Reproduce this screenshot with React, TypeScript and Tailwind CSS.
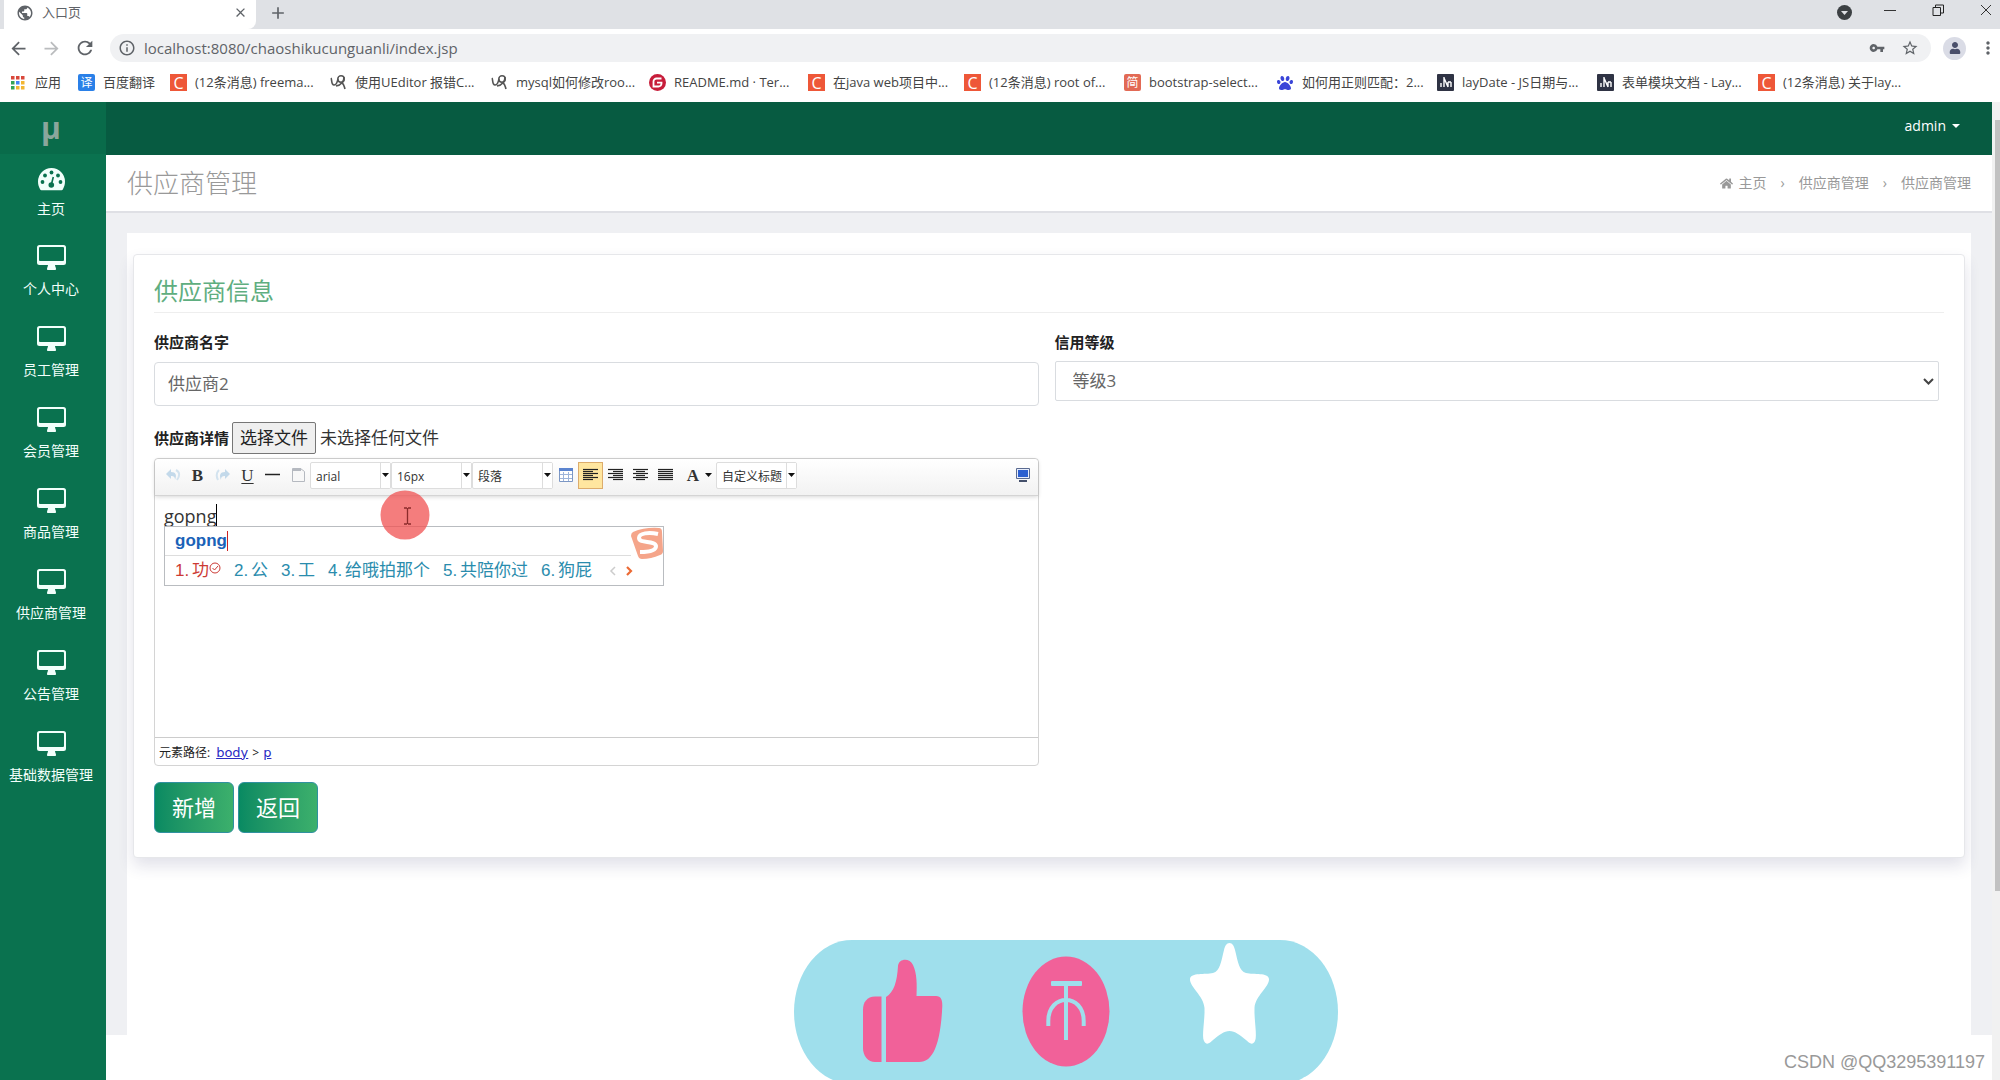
import { useRef } from "react";
import type { ReactNode } from "react";
import { FaPaw, FaHome, FaUser } from "react-icons/fa";
import {
  MdArrowBack,
  MdArrowForward,
  MdRefresh,
  MdStarBorder,
  MdVpnKey,
  MdMoreVert,
  MdPublic,
  MdInfoOutline,
  MdAdd,
  MdClose,
} from "react-icons/md";

const menuItems = [
  "个人中心",
  "员工管理",
  "会员管理",
  "商品管理",
  "供应商管理",
  "公告管理",
  "基础数据管理",
];

type IconKind = "fanyi" | "c" | "q" | "gitee" | "jian" | "baidu" | "layui";

const bookmarks: { icon: IconKind; text: string; width: string }[] = [
  { icon: "fanyi", text: "百度翻译", width: "w-[92px]" },
  { icon: "c", text: "(12条消息) freema...", width: "w-[160px]" },
  { icon: "q", text: "使用UEditor 报错C...", width: "w-[161px]" },
  { icon: "q", text: "mysql如何修改roo...", width: "w-[158px]" },
  { icon: "gitee", text: "README.md · Ter...", width: "w-[159px]" },
  { icon: "c", text: "在java web项目中...", width: "w-[156px]" },
  { icon: "c", text: "(12条消息) root of...", width: "w-[160px]" },
  { icon: "jian", text: "bootstrap-select...", width: "w-[153px]" },
  { icon: "baidu", text: "如何用正则匹配：2...", width: "w-[160px]" },
  { icon: "layui", text: "layDate - JS日期与...", width: "w-[160px]" },
  { icon: "layui", text: "表单模块文档 - Lay...", width: "w-[161px]" },
  { icon: "c", text: "(12条消息) 关于lay...", width: "w-[160px]" },
];

function BookmarkIcon({ kind }: { kind: IconKind }) {
  const box = "flex h-[17px] w-[17px] shrink-0 items-center justify-center text-white leading-none";
  switch (kind) {
    case "fanyi":
      return <span className={`${box} rounded-xs bg-[#2a80e8] text-xs`}>译</span>;
    case "c":
      return <span className={`${box} bg-[#ee5738] text-base`}>C</span>;
    case "jian":
      return <span className={`${box} rounded-xs bg-[#e26a55] text-xs`}>简</span>;
    case "gitee":
      return (
        <svg className="h-[17px] w-[17px] shrink-0" viewBox="0 0 17 17">
          <circle cx="8.5" cy="8.5" r="8.5" fill="#c71d3a" />
          <path d="M12.5 4.500H7.500a3 3 0 0 0-3 3v5h5a3 3 0 0 0 3-3V8.700H8" fill="none" stroke="#fff" strokeWidth="1.8" />
        </svg>
      );
    case "baidu":
      return <FaPaw className="mr-px h-4 w-4 shrink-0 text-[#3a45d8]" />;
    case "layui":
      return (
        <svg className="h-[17px] w-[17px] shrink-0" viewBox="0 0 17 17">
          <rect width="17" height="17" rx="1" fill="#2f3344" />
          <path d="M4 13V9M7 3v10M7 4l4 9M11 8v5M14 8v5M11 8h3" fill="none" stroke="#fff" strokeWidth="1.4" />
        </svg>
      );
    default:
      return (
        <svg className="h-[17px] w-[17px] shrink-0" viewBox="0 0 17 17" fill="none" stroke="#555" strokeWidth="1.6">
          <path d="M1 4c1 1 0 7 3 7s3-3 4-6" />
          <circle cx="11" cy="5" r="3.2" />
          <path d="M14 3c0 5-3 8-8 9M12 9c2 1 2 3 3 6" />
        </svg>
      );
  }
}

function BrowserChrome() {
  const dots = ["#d9483b", "#d9483b", "#d9483b", "#35a355", "#4285f4", "#f2b632", "#35a355", "#f2b632", "#f2b632"];
  return (
    <div className="text-[#5f6368]">
      {/* Tab strip */}
      <div className="flex h-[29px] justify-between bg-[#dfe1e5] pl-1">
        <div className="flex h-full items-center">
          <div className="flex h-full w-[252px] items-center rounded-br-lg bg-white pr-2 pb-1 pl-3">
            <MdPublic className="h-[18px] w-[18px]" />
            <span className="ml-2 text-[13px]">入口页</span>
            <button aria-label="关闭标签页" className="ml-auto">
              <MdClose className="h-[15px] w-[15px]" />
            </button>
          </div>
          <button aria-label="新标签页" className="ml-3 pb-1">
            <MdAdd className="h-5 w-5" />
          </button>
        </div>
        <div className="flex h-5 items-center text-[#333]">
          <button aria-label="搜索标签页" className="mt-1 mr-8">
            <svg width="15" height="15" viewBox="0 0 15 15">
              <circle cx="7.5" cy="7.5" r="7.5" fill="#3c4043" />
              <path d="M4 6h7l-3.500 4z" fill="#dfe1e5" />
            </svg>
          </button>
          <button aria-label="最小化" className="mr-9">
            <svg width="12" height="12" viewBox="0 0 12 12"><path d="M0 6.500h12" stroke="#333" /></svg>
          </button>
          <button aria-label="还原" className="mr-9">
            <svg width="12" height="12" viewBox="0 0 12 12" fill="none" stroke="#222">
              <path d="M1 3.500h7.500v8H1zM3.500 3V1h8v8H9" />
            </svg>
          </button>
          <button aria-label="关闭" className="mr-2">
            <svg width="12" height="12" viewBox="0 0 12 12"><path d="M1 1l10 10M11 1L1 11" stroke="#333" /></svg>
          </button>
        </div>
      </div>

      {/* Address bar */}
      <div className="flex h-[38px] items-center pl-2">
        <MdArrowBack className="h-[21px] w-[21px]" />
        <MdArrowForward className="ml-3 h-[21px] w-[21px] text-[#babcbe]" />
        <MdRefresh className="ml-3 h-[22px] w-[22px]" />
        <div className="ml-[14px] flex h-7 flex-1 items-center rounded-full bg-[#f0f1f3] pr-3 pl-2">
          <MdInfoOutline className="h-[18px] w-[18px]" />
          <input
            aria-label="地址"
            className="ml-2 flex-1 bg-transparent text-[15px] text-[#5f6368] outline-none"
            defaultValue="localhost:8080/chaoshikucunguanli/index.jsp"
          />
          <MdVpnKey className="h-4 w-4" />
          <MdStarBorder className="ml-4 h-[18px] w-[18px]" />
        </div>
        <span className="ml-3 flex h-[23px] w-[23px] items-center justify-center rounded-full bg-[#dadce6]">
          <FaUser className="h-3 w-3 text-[#4a4f6b]" />
        </span>
        <MdMoreVert className="mr-[2px] ml-3 h-5 w-5" />
      </div>

      {/* Bookmarks */}
      <div className="flex h-[35px] items-center overflow-hidden pb-1 pl-[10px] text-[13px] text-[#444]">
        <a href="#" className="flex w-[68px] shrink-0 items-center gap-2">
          <svg width="17" height="17" viewBox="0 0 17 17">
            {dots.map((color, i) => (
              <rect key={i} x={1 + (i % 3) * 5} y={2 + Math.floor(i / 3) * 5} width="3.5" height="3.5" fill={color} />
            ))}
          </svg>
          应用
        </a>
        {bookmarks.map((item, i) => (
          <a key={i} href="#" className={`flex shrink-0 items-center gap-2 whitespace-nowrap ${item.width}`}>
            <BookmarkIcon kind={item.icon} />
            {item.text}
          </a>
        ))}
      </div>
    </div>
  );
}

function DesktopIcon() {
  return (
    <svg className="h-[25px] w-[29px]" viewBox="0 0 29 25" fill="#f2fffb">
      <path
        fillRule="evenodd"
        d="M2.5 0h24A2.500 2.500 0 0 1 29 2.500v15a2.500 2.500 0 0 1-2.500 2.500H18c0 1.500 1 2.500 1 4 0 .6-.4 1-1 1h-7c-.6 0-1-.4-1-1 0-1.500 1-2.500 1-4H2.500A2.500 2.500 0 0 1 0 17.500v-15A2.500 2.500 0 0 1 2.500 0zM3 2q-1 0-1 1v12q0 1 1 1h23q1 0 1-1V3q0-1-1-1z"
      />
    </svg>
  );
}

function DashboardIcon() {
  return (
    <svg className="h-[23px] w-[27px]" viewBox="0 0 27 23">
      <path d="M13.5 0A13.500 13.500 0 0 0 0 13.500c0 3 .8 5.500 2.200 8 .3.500.7.7 1.200.7h20.200c.5 0 .9-.2 1.200-.7 1.400-2.500 2.200-5 2.200-8A13.500 13.500 0 0 0 13.500 0z" fill="#f2fffb" />
      <g fill="#0a724f">
        <circle cx="4.5" cy="14" r="1.9" />
        <circle cx="7" cy="7.5" r="1.9" />
        <circle cx="13.5" cy="4.5" r="1.9" />
        <circle cx="20" cy="7.5" r="1.9" />
        <circle cx="22.5" cy="14" r="1.9" />
        <circle cx="13.3" cy="17" r="2.8" />
      </g>
      <path d="M13.3 17l2-8" stroke="#0a724f" strokeWidth="1.6" />
    </svg>
  );
}

function Sidebar() {
  return (
    <nav className="w-[106px] shrink-0 bg-[#0a724f] text-sm text-[#f2fffb]">
      <div className="flex h-[52px] items-center justify-center bg-[#096b4a] pr-1 text-[30px] font-bold text-[#8aa69c]">
        μ
      </div>
      <a href="#" className="flex h-[79px] flex-col items-center pt-[14px] pr-1">
        <DashboardIcon />
        <span className="mt-2 whitespace-nowrap leading-5">主页</span>
      </a>
      {menuItems.map((item) => (
        <a key={item} href="#" className="flex h-[81px] flex-col items-center pt-3 pr-1">
          <DesktopIcon />
          <span className="mt-[9px] whitespace-nowrap leading-5">{item}</span>
        </a>
      ))}
    </nav>
  );
}

function Caret() {
  return (
    <svg className="h-1 w-[7px]" viewBox="0 0 7 4">
      <path d="M0 0h7L3.500 4z" fill="#111" />
    </svg>
  );
}

function ToolButton({ label, active, children }: { label: string; active?: boolean; children: ReactNode }) {
  return (
    <button
      type="button"
      aria-label={label}
      className={`flex h-[27px] w-[25px] items-center justify-center font-[family-name:'Liberation_Serif',serif] text-[17px] leading-none text-[#333] ${
        active ? "border border-[#dcac6c] bg-[#ffe69f]" : ""
      }`}
    >
      {children}
    </button>
  );
}

function Combo({ label, value }: { label: string; value: string }) {
  return (
    <div className="relative h-[27px] w-[81px] shrink-0 rounded-xs border border-[#ddd] bg-white">
      <select
        aria-label={label}
        className="h-full w-full appearance-none pr-3 pl-[5px] text-xs text-[#333] outline-none"
      >
        <option>{value}</option>
      </select>
      <span className="pointer-events-none absolute inset-y-0 right-0 flex w-[10px] items-center justify-center border-l border-[#ddd] bg-white">
        <Caret />
      </span>
    </div>
  );
}

// each line is [x1, x2]
function AlignIcon({ lines }: { lines: number[][] }) {
  return (
    <svg className="h-4 w-4" viewBox="0 0 16 16" stroke="#222" strokeWidth="1.2">
      {lines.map(([a, b], i) => (
        <path key={i} d={`M${a} ${i * 2 + 2.5}H${b}`} />
      ))}
    </svg>
  );
}

function EditorToolbar() {
  return (
    <div className="flex h-[37px] items-center rounded-t border-b border-[#d4d4d4] bg-linear-to-b from-white to-[#f2f2f2] px-[5px] pb-1 shadow-[0_1px_4px_rgba(0,0,0,0.16)]">
      <ToolButton label="撤销">
        <svg className="h-4 w-4" viewBox="0 0 16 16">
          <path d="M1 7l5-5v3c5 0 6 3 4 8 0-3-1-4-4-4v3z" fill="#c3d9ea" />
          <path d="M11 3c4 2 4 6 1 10" fill="none" stroke="#d3e3ef" strokeWidth="2" />
        </svg>
      </ToolButton>
      <ToolButton label="加粗"><b>B</b></ToolButton>
      <ToolButton label="重做">
        <svg className="h-4 w-4" viewBox="0 0 16 16">
          <path d="M15 7l-5-5v3c-5 0-6 3-4 8 0-3 1-4 4-4v3z" fill="#c3d9ea" />
          <path d="M4 3c-3 3-3 6-1 10" fill="none" stroke="#d3e3ef" strokeWidth="2" />
        </svg>
      </ToolButton>
      <ToolButton label="下划线"><span className="underline underline-offset-2">U</span></ToolButton>
      <ToolButton label="分隔线">
        <svg className="h-4 w-4" viewBox="0 0 16 16"><path d="M0 7.500h15" stroke="#222" strokeWidth="1.5" /></svg>
      </ToolButton>
      <ToolButton label="清空文档">
        <svg className="h-4 w-4" viewBox="0 0 16 16">
          <path d="M2.500 1.500h8l4 3v10h-12z" fill="#f8f8f8" stroke="#b5b9c0" />
          <path d="M3 1h8v3H3z" fill="#b5b9c0" />
        </svg>
      </ToolButton>
      <Combo label="字体" value="arial" />
      <Combo label="字号" value="16px" />
      <Combo label="段落格式" value="段落" />
      <ToolButton label="插入表格">
        <svg className="h-4 w-4" viewBox="0 0 16 16">
          <path d="M1.500 1.500h13v13h-13z" fill="#fff" stroke="#7c97c4" />
          <path d="M1 1h14v3H1z" fill="#5b84cf" />
          <path d="M2 7.500h12M2 11.500h12M5.500 5v9M10.500 5v9" stroke="#9db4da" />
        </svg>
      </ToolButton>
      <ToolButton label="居左对齐" active>
        <AlignIcon lines={[[0, 15], [0, 10], [0, 15], [0, 10], [0, 15], [0, 10]]} />
      </ToolButton>
      <ToolButton label="居右对齐">
        <AlignIcon lines={[[0, 15], [5, 15], [0, 15], [5, 15], [0, 15], [5, 15]]} />
      </ToolButton>
      <ToolButton label="居中对齐">
        <AlignIcon lines={[[0, 15], [3, 12], [0, 15], [3, 12], [0, 15], [3, 12]]} />
      </ToolButton>
      <ToolButton label="两端对齐">
        <AlignIcon lines={[[0, 15], [0, 15], [0, 15], [0, 15], [0, 15], [0, 15]]} />
      </ToolButton>
      <button
        type="button"
        aria-label="字体颜色"
        className="flex w-[38px] items-center justify-end gap-[6px] pr-1 font-[family-name:'Liberation_Serif',serif] text-[17px] font-bold leading-none text-[#333]"
      >
        A <Caret />
      </button>
      <Combo label="自定义标题" value="自定义标题" />
      <button type="button" aria-label="全屏" className="mr-[2px] ml-auto">
        <svg className="h-4 w-4" viewBox="0 0 16 16">
          <path d="M1.500 1.500h13v10h-13z" fill="#e8eefc" stroke="#5a6a90" />
          <path d="M3 3h10v7H3z" fill="#2b5fd0" />
          <path d="M4 14h8" stroke="#44506b" strokeWidth="2" />
        </svg>
      </button>
    </div>
  );
}

function ImePopup() {
  const candidates = ["公", "工", "给哦拍那个", "共陪你过", "狗屁"];
  return (
    <div className="absolute top-[30px] left-[9px] h-[60px] w-[500px] border border-[#b9bcc0] bg-white font-[family-name:'Liberation_Sans','Noto_Sans_CJK_SC',sans-serif] text-[17px]">
      <div className="mr-8 flex h-[29px] items-center border-b border-[#ddd] pl-[10px] font-bold text-[#1a62b8]">
        <span className="border-r border-[#c22] leading-5">gopng</span>
      </div>
      <div className="flex h-[29px] items-center gap-[13px] pl-[10px] whitespace-nowrap text-[#2a8cad]">
        <span className="flex text-[#cc3a35]">
          <span className="w-[17px]">1.</span>功
          <svg className="mt-1 h-3 w-3" viewBox="0 0 12 12" fill="none" stroke="#cc3a35">
            <circle cx="6" cy="6" r="5" />
            <path d="M3.500 6l2 2 3.500-4" />
          </svg>
        </span>
        {candidates.map((item, i) => (
          <span key={item} className="flex">
            <span className="w-[17px]">{i + 2}.</span>
            {item}
          </span>
        ))}
        <span className="ml-1 flex gap-[10px]">
          <svg className="h-[10px] w-[7px]" viewBox="0 0 7 10" fill="none"><path d="M6 1L2 5l4 4" stroke="#ccc" strokeWidth="1.5" /></svg>
          <svg className="h-[10px] w-[7px]" viewBox="0 0 7 10" fill="none"><path d="M1 1l4 4-4 4" stroke="#ec6a34" strokeWidth="2.2" /></svg>
        </span>
      </div>
      <svg className="absolute top-0 right-0 h-8 w-[33px]" viewBox="0 0 33 32">
        <path d="M3 5Q15 0 29 1q3 0 3 4l1 19q0 3-3 4-9 4-18 4-3 0-4-3L1 9q0-3 2-4z" fill="#f5a58a" />
        <path d="M28 7c-9-2-19-1-19 4 0 6 16 2 17 8 0 5-9 6-16 6" fill="none" stroke="#fff" strokeWidth="4" />
      </svg>
    </div>
  );
}

function SupplierForm() {
  const fileRef = useRef<HTMLInputElement>(null);
  return (
    <form
      className="rounded-sm border border-[#e6e7ea] bg-white px-5 pt-5 pb-6 shadow-[0_8px_16px_rgba(40,40,100,0.14)]"
      onSubmit={(e) => e.preventDefault()}
    >
      <h2 className="border-b border-[#eee] pb-[5px] text-2xl leading-8 text-[#5fae80]">供应商信息</h2>
      <div className="mt-[19px] grid grid-cols-2 gap-4 pr-[5px]">
        <div>
          <label htmlFor="name" className="block text-[15px] leading-5 font-bold text-[#222]">供应商名字</label>
          <input
            id="name"
            defaultValue="供应商2"
            className="mt-[10px] h-11 w-full rounded border border-[#d9dce0] px-[13px] pb-[3px] text-[17px] text-[#666] outline-none"
          />
        </div>
        <div>
          <label htmlFor="level" className="block text-[15px] leading-5 font-bold text-[#222]">信用等级</label>
          <div className="relative mt-[9px]">
            <select
              id="level"
              className="h-10 w-full appearance-none rounded-xs border border-[#d9dce0] bg-white px-[17px] text-[17px] text-[#666] outline-none"
            >
              <option>等级3</option>
            </select>
            <svg className="pointer-events-none absolute top-[17px] right-[5px] h-[7px] w-[11px]" viewBox="0 0 11 7">
              <path d="M1 1l4.500 4.500L10 1" fill="none" stroke="#444" strokeWidth="2" />
            </svg>
          </div>
        </div>
        <div>
          <div className="flex h-8 items-center text-[17px] text-[#333]">
            <label htmlFor="detail-file" className="text-[15px] font-bold text-[#222]">供应商详情</label>
            <button
              type="button"
              onClick={() => fileRef.current?.click()}
              className="ml-[3px] h-8 w-[84px] rounded-xs border border-[#767676] bg-[#efefef] whitespace-nowrap text-[#222]"
            >
              选择文件
            </button>
            <input ref={fileRef} id="detail-file" type="file" className="hidden" />
            <span className="ml-1">未选择任何文件</span>
          </div>
          <div className="mt-1 rounded border border-[#d4d4d4]">
            <EditorToolbar />
            <div className="relative h-[241px]">
              <div
                role="textbox"
                aria-label="供应商详情"
                contentEditable
                suppressContentEditableWarning
                className="h-full px-[9px] pt-2 text-lg leading-6 text-[#333] outline-none"
              >
                <span className="border-r border-black">gopng</span>
              </div>
              <ImePopup />
              {/* click highlight with the text cursor */}
              <svg className="pointer-events-none absolute -top-[6px] left-[225px] h-[50px] w-[50px]" viewBox="0 0 50 50">
                <circle cx="25" cy="25" r="24.5" fill="#f04f4f" fillOpacity="0.74" />
                <path d="M24 18h3m1 0h3M24 34h3m1 0h3M27.500 18v16" stroke="#8b2b2b" strokeWidth="1.3" />
              </svg>
            </div>
            <div className="flex h-7 items-center border-t border-[#ccc] px-1 pt-[2px] text-xs text-[#222]">
              元素路径:
              <a href="#" className="ml-[6px] font-[family-name:'DejaVu_Sans',sans-serif] text-[13px] text-[#2b2bc4] underline">body</a>
              <span className="mx-1">&gt;</span>
              <a href="#" className="font-[family-name:'DejaVu_Sans',sans-serif] text-[13px] text-[#2b2bc4] underline">p</a>
            </div>
          </div>
        </div>
      </div>
      <div className="mt-4 flex gap-1 text-[22px] text-white">
        <button className="h-[51px] w-20 rounded-md border border-[#3091a0] bg-linear-to-r from-[#088a62] to-[#3cb06c]">新增</button>
        <button type="button" className="h-[51px] w-20 rounded-md border border-[#3091a0] bg-linear-to-r from-[#088a62] to-[#3cb06c]">返回</button>
      </div>
    </form>
  );
}

function LikeBanner() {
  return (
    <svg className="pointer-events-none fixed bottom-0 left-[794px] h-[140px] w-[544px]" viewBox="0 0 544 140">
      <path d="M58 0H486a58 72 0 0 1 0 144H58a58 72 0 0 1 0-144z" fill="#9fdfec" />
      <g fill="#f16199">
        <path d="M87.500 56.500H81c-8 0-12 6-12 13V108c0 8 5 14 12 14h6.500z" />
        <path d="M92 57c8-5 11-15 12-31 1-8 12-8 15-1 4 8 4 20 3.500 31H142c5 0 6.500 4 6.300 10-.8 19-3.300 34-7.300 43-4 9-9 13-16 13H92z" />
        <ellipse cx="272" cy="71.5" rx="43.5" ry="55" />
      </g>
      <path d="M272 44v56M254.300 86v-5c0-28 35.400-28 35.400 0v5" fill="none" stroke="#9fdfec" strokeWidth="4" />
      <rect x="257" y="41" width="31" height="5" rx="1" fill="#9fdfec" />
      <path
        d="M435.500 3c3 0 4.500 3 5.500 7 3 12 4 21 11 23 8 2 22-1 23 6 .5 8-14 17-14.500 29-.5 12 3 28 .5 33s-6 2-9-1c-6-5-11-9-16.500-9s-10.500 4-16.500 9c-3 3-6.500 6-9 1s1-21 .5-33C410 56 395.500 47 396 39c1-7 15-4 23-6 7-2 8-11 11-23 1-4 2.500-7 5.500-7z"
        fill="#fff"
      />
    </svg>
  );
}

export default function App() {
  return (
    <div className="flex min-h-screen flex-col bg-white font-[family-name:'Open_Sans','Noto_Sans_CJK_SC',sans-serif]">
      <BrowserChrome />
      <div className="flex flex-1">
        <Sidebar />
        <div className="flex min-w-0 flex-1 flex-col">
          <header className="flex h-[53px] items-center justify-end bg-[#075b41] pr-8 pb-[6px]">
            <button className="flex items-center gap-[6px] text-sm text-white">
              admin
              <svg className="h-1 w-2" viewBox="0 0 8 4"><path d="M0 0h8L4 4z" fill="#fff" /></svg>
            </button>
          </header>
          <div className="flex h-[58px] items-center justify-between border-b-2 border-[#dfe0e5] px-[21px]">
            <h1 className="text-[26px] font-light text-[#999]">供应商管理</h1>
            <nav className="flex items-center text-sm text-[#999]">
              <FaHome className="mr-[6px] h-[13px] w-[13px]" />
              <a href="#">主页</a>
              <span className="mx-[14px]">›</span>
              <a href="#">供应商管理</a>
              <span className="mx-[14px]">›</span>
              <span>供应商管理</span>
            </nav>
          </div>
          <main className="bg-[#eff0f3] px-[21px] pt-5">
            <div className="bg-white px-[6px] pt-[21px] pb-[177px]">
              <SupplierForm />
            </div>
          </main>
          <footer className="flex flex-1 items-center justify-end pt-2 pr-[7px] font-[family-name:'Liberation_Sans',sans-serif] text-lg text-[#999]">
            CSDN @QQ3295391197
          </footer>
        </div>
        {/* Page scrollbar */}
        <div className="w-2 shrink-0 bg-[#f1f1f1] pt-[18px] pl-[3px]">
          <div className="h-[771px] bg-[#c1c1c1]" />
        </div>
      </div>
      <LikeBanner />
    </div>
  );
}
